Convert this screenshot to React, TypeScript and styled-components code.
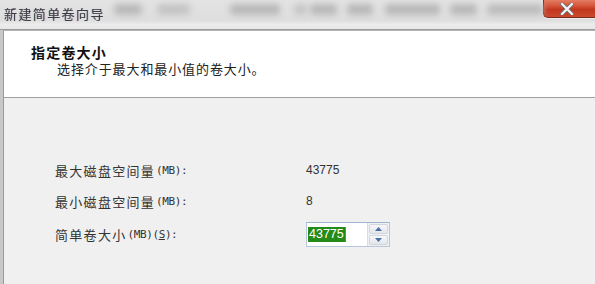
import styled, { createGlobalStyle } from 'styled-components';

const GlobalStyle = createGlobalStyle`
  html, body {
    margin: 0;
    padding: 0;
    background: #f0f0f0;
  }
  body {
    font-family: "SimSun", "Noto Sans CJK SC", "DejaVu Sans", sans-serif;
  }
`;

const Window = styled.div`
  width: 595px;
  height: 284px;
  display: flex;
  flex-direction: column;
  overflow: hidden;
  background: #f0f0f0;
`;

const TitleBar = styled.div`
  height: 30px;
  flex: 0 0 30px;
  display: flex;
  align-items: flex-start;
  box-sizing: border-box;
  background: linear-gradient(#e3e3e3 0%, #dedede 70%, #ececec 85%, #e6e6e6 100%);
  border-bottom: 1px solid #9c9c9c;
`;

const Title = styled.div`
  width: 108px;
  padding: 6px 0 0 4px;
  box-sizing: border-box;
  font-size: 13px;
  letter-spacing: 1.4px;
  line-height: 16px;
  color: #3c3c44;
  white-space: nowrap;
  filter: blur(0.35px);
  text-shadow: 0.6px 0 0 rgba(160, 90, 170, 0.35), -0.6px 0 0 rgba(90, 160, 110, 0.35);
`;

const Glass = styled.div`
  display: flex;
  padding-top: 4px;
`;

const Blob = styled.span<{ $w: number; $gap: number; $tone?: string }>`
  display: block;
  width: ${(p) => p.$w}px;
  height: 11px;
  margin-left: ${(p) => p.$gap}px;
  background: ${(p) => p.$tone ?? '#b9b9b9'};
  border-radius: 4px;
  filter: blur(3px);
`;

const CloseButton = styled.div`
  margin-left: auto;
  margin-top: -3px;
  width: 54px;
  height: 21px;
  box-sizing: border-box;
  display: flex;
  align-items: center;
  justify-content: center;
  padding-right: 4px;
  padding-top: 2px;
  border: 1px solid #7d2a1e;
  border-right: none;
  border-radius: 0 0 0 5px;
  background: linear-gradient(#e98a72 0%, #d6573c 40%, #c2371f 60%, #c94a2c 100%);
  box-shadow: 0 1px 0 rgba(255, 255, 255, 0.4);
`;

const Body = styled.div`
  flex: 1;
  display: flex;
  flex-direction: column;
  border-left: 3px solid #c8c8c8;
  box-shadow: inset 1px 0 0 #9a9a9a;
`;

const Header = styled.div`
  height: 68px;
  flex: 0 0 68px;
  box-sizing: border-box;
  background: #fff;
  border-top: 1px solid #b4b4b4;
  border-left: 1px solid #9a9a9a;
  border-bottom: 1px solid #a0a0a0;
  box-shadow: 0 1px 0 #ffffff;
  padding: 13px 0 0 27px;
`;

const HeaderTitle = styled.div`
  font-size: 14px;
  font-weight: bold;
  letter-spacing: 1.2px;
  line-height: 16px;
  color: #111;
`;

const HeaderSub = styled.div`
  margin: 1px 0 0 26px;
  font-size: 13px;
  letter-spacing: 0.9px;
  line-height: 16px;
  color: #222;
`;

const Content = styled.div`
  flex: 1;
  background: #f0f0f0;
  border-left: 1px solid #9a9a9a;
  padding: 62px 0 0 51px;
`;

const Form = styled.div`
  display: grid;
  grid-template-columns: 251px auto;
  grid-template-rows: 20px 20px 25px;
  row-gap: 11px;
  align-items: center;
`;

const Label = styled.div`
  font-size: 13px;
  letter-spacing: 1.3px;
  color: #333;
  white-space: nowrap;
  display: flex;
  align-items: center;
`;

const Ascii = styled.span`
  font-family: "DejaVu Sans Mono", "Liberation Mono", monospace;
  font-size: 11px;
  letter-spacing: -0.4px;
  margin-left: 1px;
`;

const Value = styled.div`
  font-family: "Liberation Sans", Arial, sans-serif;
  font-size: 12px;
  color: #333;
`;

const Spin = styled.div`
  display: flex;
  width: 84px;
  height: 25px;
  box-sizing: border-box;
  border: 1px solid #b8c6d8;
  border-top-color: #9fb6d2;
  background: #fff;
`;

const SpinInput = styled.div`
  flex: 1;
  display: flex;
  align-items: center;
  padding-left: 1px;
  border-right: 1px solid #d8dde4;
`;

const Selected = styled.span`
  display: inline-block;
  background: #248a18;
  color: #fff;
  font-family: "Liberation Sans", Arial, sans-serif;
  font-size: 12.5px;
  line-height: 15px;
  padding: 0 1px;
  border-right: 1px solid #d040d0;
`;

const SpinButtons = styled.div`
  width: 19px;
  display: flex;
  flex-direction: column;
  gap: 1px;
  padding: 1px;
  background: #eef0f3;
`;

const SpinButton = styled.div`
  flex: 1;
  display: flex;
  align-items: center;
  justify-content: center;
  background: linear-gradient(#f6f7f9, #e3e6ea);
  border: 1px solid #d3d7dd;
  border-radius: 2px;
`;

const Arrow = ({ up }: { up?: boolean }) => (
  <svg width="7" height="4" viewBox="0 0 7 4">
    <path d={up ? 'M0 4 L3.5 0 L7 4 Z' : 'M0 0 L3.5 4 L7 0 Z'} fill="#4a6fa8" />
  </svg>
);

export default () => {
  return (
    <Window>
      <GlobalStyle />
      {/* 标题栏 */}
      <TitleBar>
        <Title>新建简单卷向导</Title>
        <Glass>
          <Blob $w={28} $gap={9} />
          <Blob $w={33} $gap={15} $tone="#c4c4c4" />
          <Blob $w={50} $gap={40} />
          <Blob $w={13} $gap={14} $tone="#c6c6c6" />
          <Blob $w={27} $gap={3} />
          <Blob $w={26} $gap={10} />
          <Blob $w={55} $gap={12} />
          <Blob $w={27} $gap={10} />
          <Blob $w={56} $gap={10} $tone="#bdbdbd" />
        </Glass>
        <CloseButton>
          <svg width="14" height="12" viewBox="0 0 14 12">
            <path d="M2 1 L12 11 M12 1 L2 11" stroke="#6b6b6b" strokeWidth="4" strokeLinecap="round" />
            <path d="M2 1 L12 11 M12 1 L2 11" stroke="#f4f4f4" strokeWidth="2.4" strokeLinecap="round" />
          </svg>
        </CloseButton>
      </TitleBar>

      <Body>
        {/* 页眉 */}
        <Header>
          <HeaderTitle>指定卷大小</HeaderTitle>
          <HeaderSub>选择介于最大和最小值的卷大小。</HeaderSub>
        </Header>

        {/* 大小设置 */}
        <Content>
          <Form>
            <Label>
              最大磁盘空间量<Ascii>(MB):</Ascii>
            </Label>
            <Value>43775</Value>
            <Label>
              最小磁盘空间量<Ascii>(MB):</Ascii>
            </Label>
            <Value>8</Value>
            <Label>
              简单卷大小<Ascii>(MB)(<u>S</u>):</Ascii>
            </Label>
            <Spin>
              <SpinInput>
                <Selected>43775</Selected>
              </SpinInput>
              <SpinButtons>
                <SpinButton>
                  <Arrow up />
                </SpinButton>
                <SpinButton>
                  <Arrow />
                </SpinButton>
              </SpinButtons>
            </Spin>
          </Form>
        </Content>
      </Body>
    </Window>
  );
};
